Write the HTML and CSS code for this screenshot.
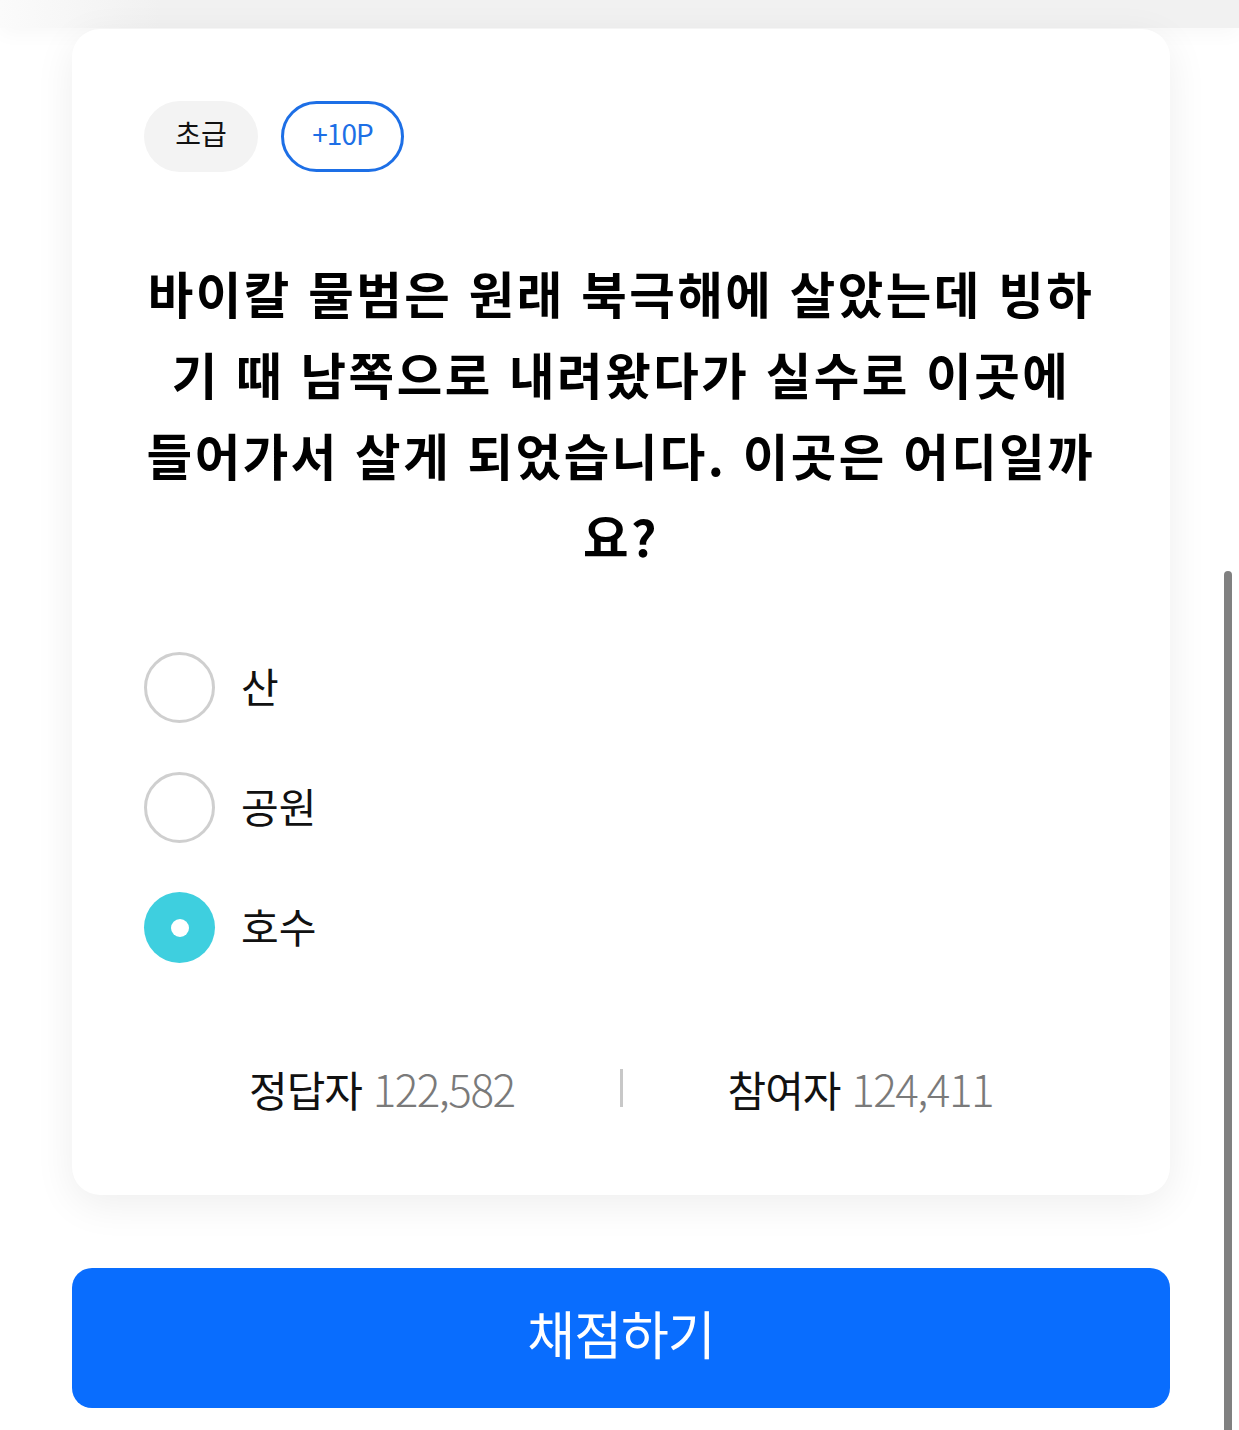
FILE: index.html
```html
<!DOCTYPE html>
<html lang="ko">
<head>
    <meta charset="UTF-8">
    <meta name="viewport" content="width=device-width, initial-scale=1.0">
    <title>오늘의 퀴즈</title>
    <link rel="stylesheet" href="styles.css">
</head>
<body>
    <div class="top-band"></div>

    <div class="page">
        <div class="quiz-card">
            <div class="tags">
                <span class="tag tag-level">초급</span>
                <span class="tag tag-point">+10P</span>
            </div>

            <h1 class="question">바이칼 물범은 원래 북극해에 살았는데 빙하기 때 남쪽으로 내려왔다가 실수로 이곳에 들어가서 살게 되었습니다. 이곳은 어디일까요?</h1>

            <ul class="options">
                <li class="option"><span class="radio"></span><span class="label">산</span></li>
                <li class="option"><span class="radio"></span><span class="label">공원</span></li>
                <li class="option is-checked"><span class="radio"></span><span class="label">호수</span></li>
            </ul>

            <div class="stats">
                <div class="stat">정답자 <span class="num">122,582</span></div>
                <div class="divider"></div>
                <div class="stat">참여자 <span class="num">124,411</span></div>
            </div>
        </div>

        <button class="submit-btn">채점하기</button>
    </div>

    <div class="scroll-thumb"></div>
</body>
</html>
```

FILE: styles.css
```css
body {
    font-family: "Noto Sans CJK KR", "Noto Sans", sans-serif;
    background: #fff;
    margin: 0;
    color: #111;
    overflow: hidden;
}

.top-band {
    height: 28px;
    background: linear-gradient(90deg, #fbfbfb 0, #f1f1f1 160px, #f1f1f1 100%);
    box-shadow: 0 6px 20px rgba(0,0,0,0.03);
}

.page {
    width: 1098px;
    margin-left: 72px;
    padding-top: 1px;
}

.quiz-card {
    background: white;
    border-radius: 28px;
    box-shadow: 0 10px 40px rgba(0,0,0,0.07);
    padding: 72px 72px 75px;
}

.tags {
    display: flex;
    gap: 23px;
}

.tag {
    display: flex;
    align-items: center;
    justify-content: center;
    height: 71px;
    padding-bottom: 8px;
    border-radius: 36px;
    font-size: 28px;
    box-sizing: border-box;
}

.tag-level {
    width: 114px;
    background: #f3f3f3;
    color: #111;
}

.tag-point {
    width: 123px;
    border: 3px solid #1d6fe6;
    color: #1d6fe6;
    letter-spacing: -1px;
}

.question {
    margin: 80px 0 0;
    font-size: 49.5px;
    font-weight: 700;
    line-height: 81px;
    text-align: center;
    word-break: break-all;
    letter-spacing: 2.5px;
    color: #000;
}

.options {
    list-style: none;
    margin: 76px 0 0;
    padding: 0;
    display: flex;
    flex-direction: column;
    gap: 49px;
}

.option {
    display: flex;
    align-items: center;
    gap: 26px;
    font-size: 41px;
}

.radio {
    width: 71px;
    height: 71px;
    border-radius: 50%;
    border: 3px solid #cfcfcf;
    box-sizing: border-box;
    display: flex;
    align-items: center;
    justify-content: center;
}

.is-checked .radio {
    border: none;
    background: #3ecfdf;
}

.is-checked .radio::after {
    content: "";
    width: 18px;
    height: 18px;
    border-radius: 50%;
    background: white;
}

.label {
    line-height: 1;
    padding-bottom: 4px;
}

.stats {
    margin-top: 93px;
    display: flex;
    align-items: center;
}

.stat {
    flex: 1;
    text-align: center;
    font-size: 42px;
    letter-spacing: -1px;
}

.num {
    color: #7a7a7a;
    font-weight: 300;
    font-size: 44px;
    letter-spacing: -1.5px;
}

.divider {
    width: 3px;
    height: 38px;
    background: #c8c8c8;
}

.submit-btn {
    display: block;
    width: 100%;
    height: 140px;
    margin-top: 73px;
    padding: 0 0 12px;
    border: none;
    border-radius: 20px;
    background: #096dfe;
    color: white;
    font-family: inherit;
    font-size: 52px;
    letter-spacing: -1px;
}

.scroll-thumb {
    position: absolute;
    left: 1224px;
    top: 571px;
    width: 8px;
    height: 900px;
    background: #808080;
    border-radius: 4px 4px 0 0;
}
```
